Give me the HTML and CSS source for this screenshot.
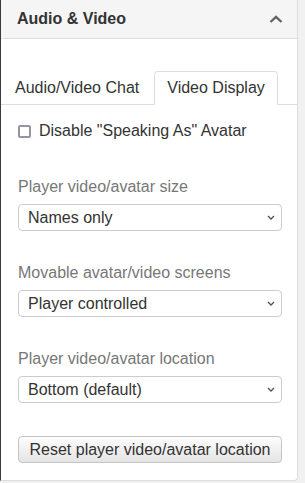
FILE: index.html
```html
<!DOCTYPE html>
<html lang="en">
<head>
  <meta charset="UTF-8" />
  <meta name="viewport" content="width=device-width, initial-scale=1.0" />
  <title>Audio &amp; Video</title>
  <link rel="stylesheet" href="styles.css">
</head>
<body>
  <div class="panel">
    <div class="panel-heading">
      <span>Audio &amp; Video</span>
      <svg class="collapse-icon" viewBox="0 0 14 8" aria-hidden="true">
        <path d="M1.5 7L7 1.8 12.5 7" />
      </svg>
    </div>

    <div class="panel-body">
      <ul class="tabs">
        <li class="tab">Audio/Video Chat</li>
        <li class="tab active">Video Display</li>
      </ul>

      <div class="content">
        <label class="check">
          <input type="checkbox" />
          <span>Disable "Speaking As" Avatar</span>
        </label>

        <div class="field">
          <label for="size">Player video/avatar size</label>
          <div class="select-wrap">
            <select id="size">
              <option>Names only</option>
              <option>Small</option>
              <option>Medium</option>
              <option>Large</option>
            </select>
            <svg class="caret" viewBox="0 0 8 5" aria-hidden="true"><path d="M1 1l3 3 3-3" /></svg>
          </div>
        </div>

        <div class="field">
          <label for="movable">Movable avatar/video screens</label>
          <div class="select-wrap">
            <select id="movable">
              <option>Player controlled</option>
              <option>GM only</option>
              <option>Locked</option>
            </select>
            <svg class="caret" viewBox="0 0 8 5" aria-hidden="true"><path d="M1 1l3 3 3-3" /></svg>
          </div>
        </div>

        <div class="field">
          <label for="location">Player video/avatar location</label>
          <div class="select-wrap">
            <select id="location">
              <option>Bottom (default)</option>
              <option>Top</option>
              <option>Left</option>
              <option>Right</option>
            </select>
            <svg class="caret" viewBox="0 0 8 5" aria-hidden="true"><path d="M1 1l3 3 3-3" /></svg>
          </div>
        </div>

        <button class="btn">Reset player video/avatar location</button>
      </div>
    </div>
  </div>
</body>
</html>
```

FILE: styles.css
```css
body {
  margin: 0;
  font-family: 'Liberation Sans', Arial, sans-serif;
  font-size: 16px;
  line-height: 20px;
  background: #f1f1f1;
  color: #333;
}
.panel {
  box-sizing: border-box;
  width: 298px;
  background: #fff;
  border: 1px solid #ddd;
  border-top: none;
  border-left-color: #3a3a3a;
  border-radius: 0 0 4px 0;
}
.panel-heading {
  display: flex;
  align-items: center;
  justify-content: space-between;
  padding: 9px 14px 9px 16px;
  background: #f5f5f5;
  border-bottom: 1px solid #ddd;
  font-weight: 700;
  color: #333;
}
.collapse-icon {
  width: 14px;
  height: 8px;
  fill: none;
  stroke: #666;
  stroke-width: 2.4;
}
.panel-body {
  padding: 32px 0 17px;
}
.tabs {
  display: flex;
  margin: 0;
  padding: 0 0 0 1px;
  list-style: none;
  border-bottom: 1px solid #ddd;
}
.tab {
  padding: 6px 12px;
  margin-right: 2px;
  margin-bottom: -1px;
  border: 1px solid transparent;
  border-radius: 4px 4px 0 0;
  cursor: pointer;
}
.tab.active {
  background: #fff;
  border-color: #ddd;
  border-bottom-color: #fff;
  cursor: default;
}
.content {
  padding: 0 15px 0 17px;
}
.check {
  display: flex;
  align-items: center;
  gap: 8px;
  margin-top: 16px;
}
.check input {
  appearance: none;
  box-sizing: border-box;
  width: 13px;
  height: 13px;
  margin: 0;
  border: 2px solid #9494a4;
  border-radius: 2px;
  background: #fff;
}
.field label {
  display: block;
  margin-top: 36px;
  color: #777;
}
.field + .field label {
  margin-top: 32px;
}
.select-wrap {
  position: relative;
  margin-top: 7px;
}
.select-wrap select {
  appearance: none;
  box-sizing: border-box;
  width: 264px;
  height: 27px;
  padding: 0 9px;
  border: 1px solid #ccc;
  border-radius: 4px;
  background: #fff;
  font: inherit;
  color: #333;
}
.caret {
  position: absolute;
  right: 7px;
  top: 11px;
  width: 8px;
  height: 5px;
  fill: none;
  stroke: #555;
  stroke-width: 1.4;
  pointer-events: none;
}
.btn {
  display: block;
  box-sizing: border-box;
  width: 264px;
  height: 27px;
  margin-top: 33px;
  padding: 0;
  border: 1px solid #c4c4c4;
  border-radius: 4px;
  background: linear-gradient(#fdfdfd, #e4e4e4);
  font: inherit;
  color: #333;
  cursor: pointer;
}
```
